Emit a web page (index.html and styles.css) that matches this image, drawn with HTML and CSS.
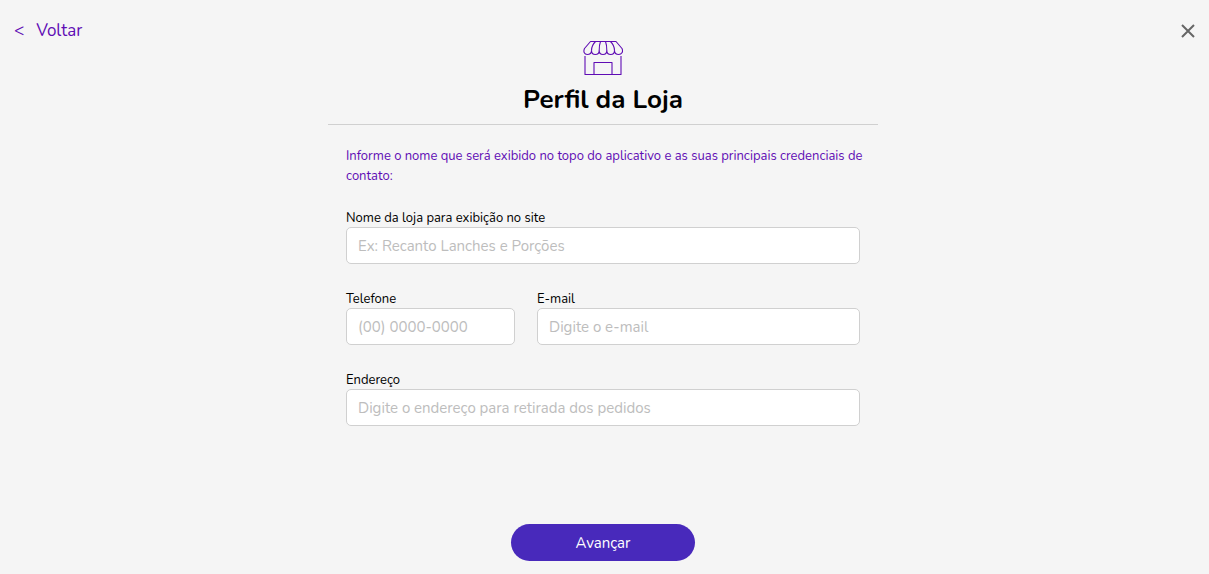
FILE: index.html
```html
<!DOCTYPE html>
<html lang="pt-BR">
<head>
<meta charset="utf-8">
<meta name="viewport" content="width=device-width, initial-scale=1">
<title>Perfil da Loja</title>
<link rel="stylesheet" href="styles.css">
</head>
<body>
<div class="page">
  <nav class="topbar">
    <a class="back" href="#"><span class="back-arrow" aria-hidden="true">&lt;</span><span>Voltar</span></a>
    <button class="close" type="button" aria-label="Fechar">
      <svg width="14" height="14" viewBox="0 0 14 14" fill="none" stroke="currentColor" stroke-width="2"><path d="M1 1 13 13M13 1 1 13"/></svg>
    </button>
  </nav>
  <main class="profile">
    <header class="heading">
      <svg class="store" width="40" height="36" viewBox="0 0 40 36" fill="none" stroke="currentColor" stroke-width="1.1" stroke-linejoin="round" aria-hidden="true">
        <path d="M7.500 1.500H33L39 8.500C40.500 12 38.500 14.500 35.800 14.500 33 14.500 31.500 12.500 31.500 10.500 31.500 13 30 14.500 27.700 14.500 25.500 14.500 23.800 13 23.800 10.500 23.800 13 22.300 14.500 20 14.500 17.700 14.500 16.200 13 16.200 10.500 16.200 13 14.500 14.500 12.300 14.500 10 14.500 8.500 13 8.500 10.500 8.500 12.500 7 14.500 4.200 14.500 1.500 14.500 0 12 1.500 8.500Z"/>
        <path d="M8.500 10.500C8.500 7 10 4 12.500 1.500M16.200 10.500C16.200 7 16.500 4 17.500 1.500M23.800 10.500C23.800 7 23.500 4 22.500 1.500M31.500 10.500C31.500 7 30 4 27.500 1.500"/>
        <path d="M2 16V34.500H38V16M11 34.500V22.500H29V34.500"/>
      </svg>
      <h1 class="title">Perfil da Loja</h1>
    </header>
    <form class="form">
      <p class="intro">Informe o nome que será exibido no topo do aplicativo e as suas principais credenciais de contato:</p>
      <div class="fields">
        <div class="field wide">
          <label for="name">Nome da loja para exibição no site</label>
          <input id="name" type="text" placeholder="Ex: Recanto Lanches e Porções">
        </div>
        <div class="field">
          <label for="phone">Telefone</label>
          <input id="phone" type="tel" placeholder="(00) 0000-0000">
        </div>
        <div class="field">
          <label for="email">E-mail</label>
          <input id="email" type="email" placeholder="Digite o e-mail">
        </div>
        <div class="field wide">
          <label for="address">Endereço</label>
          <input id="address" type="text" placeholder="Digite o endereço para retirada dos pedidos">
        </div>
      </div>
      <button class="next" type="submit">Avançar</button>
    </form>
  </main>
</div>
</body>
</html>
```
FILE: styles.css
```css
* {
  box-sizing: border-box;
}

body {
  margin: 0;
  background: #f5f5f5;
  color: #000;
  font-family: Nunito, "Open Sans", "Noto Sans", sans-serif;
}

.page {
  display: flex;
  flex-direction: column;
  min-height: 100vh;
}

.topbar {
  display: flex;
  justify-content: space-between;
  align-items: center;
  height: 40px;
  padding: 22px 13px 0 14px;
}

.back {
  display: flex;
  gap: 12px;
  color: #5f0cb4;
  font-size: 17px;
  line-height: 26px;
  text-decoration: none;
}

.close {
  display: flex;
  padding: 1px;
  border: 0;
  background: none;
  color: #666;
  cursor: pointer;
}

.profile {
  flex: 1;
  display: flex;
  flex-direction: column;
  width: 100%;
  max-width: 553px;
  margin: 0 auto;
  padding-right: 3px;
}

.heading {
  display: flex;
  flex-direction: column;
  align-items: center;
  padding-bottom: 8px;
  border-bottom: 1px solid #d0d0d0;
}

.store {
  color: #5f0cb4;
}

.title {
  margin: 8px 0 0;
  font-size: 26px;
  font-weight: 700;
  line-height: 32px;
}

.form {
  flex: 1;
  display: flex;
  flex-direction: column;
  padding: 21px 18px 13px;
}

.intro {
  margin: 0 -8px 23px 0;
  color: #5f0cb4;
  font-size: 13px;
  line-height: 20px;
}

.fields {
  display: grid;
  grid-template-columns: 169fr 323fr;
  gap: 26px 22px;
}

.field {
  display: flex;
  flex-direction: column;
  min-width: 0;
}

.wide {
  grid-column: 1 / -1;
}

.field label {
  font-size: 13px;
  line-height: 18px;
}

.field input {
  width: 100%;
  height: 37px;
  padding: 0 11px;
  border: 1px solid #d0d0d0;
  border-radius: 5px;
  background: #fff;
  color: #000;
  font: inherit;
  font-size: 15px;
}

.field input::placeholder {
  color: #bdbdbd;
  opacity: 1;
}

.next {
  align-self: center;
  width: 184px;
  height: 37px;
  margin-top: auto;
  border: 0;
  border-radius: 19px;
  background: #4829bb;
  color: #fff;
  font: inherit;
  font-size: 15px;
  cursor: pointer;
}
```
